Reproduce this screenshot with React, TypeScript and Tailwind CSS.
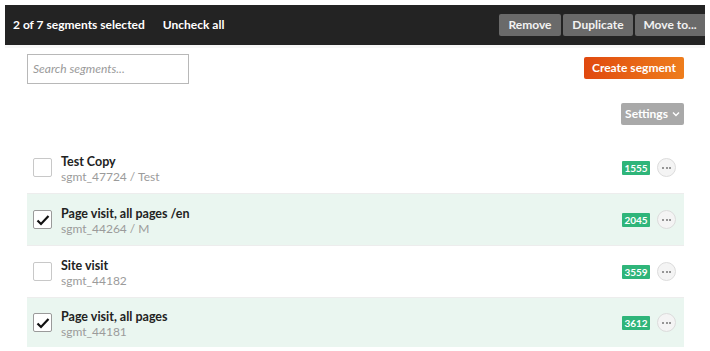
import React from "react";

const rows = [
  { title: "Test Copy", sub: "sgmt_47724 / Test", count: "1555", checked: false },
  { title: "Page visit, all pages /en", sub: "sgmt_44264 / M", count: "2045", checked: true },
  { title: "Site visit", sub: "sgmt_44182", count: "3559", checked: false },
  { title: "Page visit, all pages", sub: "sgmt_44181", count: "3612", checked: true },
];

function Check() {
  return (
    <svg width="14" height="12" viewBox="0 0 14 12">
      <path d="M1.5 6.5 L5 10 L12.5 2" fill="none" stroke="#111" strokeWidth="2.2" />
    </svg>
  );
}

export default function App() {
  return (
    <div className="w-[710px] h-[351px] bg-white overflow-hidden" style={{ fontFamily: '"Lato", "Open Sans", sans-serif' }}>
      <div className="pt-[5px] px-[5px]">
        <div className="h-[40px] bg-[#232323] flex items-center pl-[8px]">
          <span className="text-white text-[12px] font-bold">2 of 7 segments selected</span>
          <span className="text-white text-[12px] font-bold ml-[18px]">Uncheck all</span>
          <div className="ml-auto flex gap-[2px] items-center">
            <button className="h-[22px] w-[62px] bg-[#6a6a6a] text-[#f2f2f2] text-[12px] font-bold rounded-[2px]">Remove</button>
            <button className="h-[22px] w-[70px] bg-[#6a6a6a] text-[#f2f2f2] text-[12px] font-bold rounded-[2px]">Duplicate</button>
            <button className="h-[22px] w-[70px] bg-[#6a6a6a] text-[#f2f2f2] text-[12px] font-bold rounded-l-[2px]">Move to...</button>
          </div>
        </div>
        <div className="h-[3px] bg-[#f7f7f7]" />
      </div>
      <div className="px-[27px] pr-[26px]">
        <div className="flex justify-between items-start mt-[6px]">
          <div className="w-[162px] h-[30px] border border-[#b8b8b8] flex items-center px-[5px]">
            <span className="text-[12px] italic text-[#9a9a9a]">Search segments...</span>
          </div>
          <button className="mt-[3px] h-[22px] w-[100px] rounded-[2px] bg-gradient-to-r from-[#e0480f] to-[#ee7d1c] text-white text-[12px] font-bold">Create segment</button>
        </div>
        <div className="flex justify-end mt-[19px]">
          <button className="h-[22px] w-[63px] rounded-[2px] bg-[#a9a9a9] text-white text-[12px] font-bold flex items-center justify-center gap-[4px]">
            Settings
            <svg width="8" height="6" viewBox="0 0 8 6"><path d="M1 1.5 L4 4.5 L7 1.5" fill="none" stroke="#fff" strokeWidth="1.4" /></svg>
          </button>
        </div>
        <div className="mt-[17px]">
          {rows.map((r, i) => (
            <div
              key={i}
              className={`${i === 3 ? "h-[49px]" : "h-[52px] border-b border-[#ededed]"} flex items-center ${r.checked ? "bg-[#eaf6f0]" : "bg-white"}`}
            >
              <div
                className={`ml-[6px] w-[19px] h-[19px] rounded-[2px] border flex items-center justify-center ${r.checked ? "border-[#9a9a9a] bg-white" : "border-[#c8c8c8] bg-white"}`}
              >
                {r.checked && <Check />}
              </div>
              <div className="ml-[9px] flex flex-col leading-[15px] pt-[2px]">
                <span className="text-[12.5px] font-bold text-[#222]">{r.title}</span>
                <span className="text-[12px] text-[#9b9b9b]">{r.sub}</span>
              </div>
              <div className="ml-auto flex items-center">
                <span className="h-[14px] w-[28px] rounded-[1px] bg-[#2fb57a] text-white text-[10px] font-bold leading-[14px] text-center">{r.count}</span>
                <div className="ml-[7px] mr-[8px] w-[19px] h-[19px] rounded-full border border-[#dcdcdc] bg-[#f4f4f4] flex items-center justify-center gap-[1.5px]">
                  <span className="w-[2px] h-[2px] rounded-full bg-[#777]" />
                  <span className="w-[2px] h-[2px] rounded-full bg-[#777]" />
                  <span className="w-[2px] h-[2px] rounded-full bg-[#777]" />
                </div>
              </div>
            </div>
          ))}
        </div>
      </div>
    </div>
  );
}
